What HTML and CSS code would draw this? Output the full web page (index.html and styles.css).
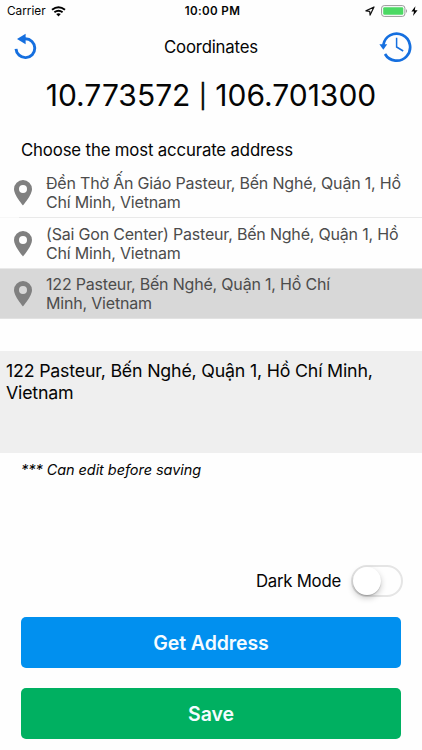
FILE: index.html
```html
<!DOCTYPE html>
<html lang="vi">
<head>
<meta charset="utf-8">
<title>Coordinates</title>
<link rel="stylesheet" href="styles.css">
</head>
<body>
<div class="screen">
  <div class="status">
    <div class="status-left"><span class="carrier">Carrier</span>
      <svg class="wifi" width="15" height="11" viewBox="0 0 15 11"><path d="M1 3.8Q7.5-1.5 14 3.8M3.4 6.3Q7.5 3 11.6 6.3" fill="none" stroke="#000" stroke-width="1.9"/><path d="M5.2 8.1Q7.5 6.4 9.8 8.1L7.5 10.5Z"/></svg>
    </div>
    <span class="time">10:00 PM</span>
    <div class="status-right">
      <svg width="10" height="10" viewBox="0 0 10 10"><path d="M.9 4.9L9 1 5.1 9.1 4.7 5.3Z" fill="none" stroke="#111" stroke-width="1.2" stroke-linejoin="round"/></svg>
      <svg class="battery" width="27" height="12" viewBox="0 0 27 12"><rect x=".6" y=".6" width="23.3" height="10.8" rx="2.6" fill="#fff" stroke="#999"/><rect x="2.2" y="2.2" width="20.1" height="7.6" rx="1.2" fill="#4cd964"/><path d="M25 4Q27 6 25 8Z" fill="#999"/></svg>
      <svg class="bolt" width="7" height="10" viewBox="0 0 7 10"><path d="M4.4.2L.4 5.5H3L2 9.9 6.6 4.2H3.8Z"/></svg>
    </div>
  </div>
  <div class="nav">
    <svg class="undo" width="24" height="28" viewBox="0 0 24 28"><path d="M3 15.8A9.4 9.4 0 1 0 12.4 5.8H10" fill="none" stroke="#156fdf" stroke-width="2.9"/><path d="M4 5.9L12.6.8V11.3Z" fill="#156fdf"/></svg>
    <h1 class="title">Coordinates</h1>
    <svg class="history" width="34" height="32" viewBox="0 0 34 32"><path d="M4.3 14A13.5 13.5 0 1 1 6 23" fill="none" stroke="#156fdf" stroke-width="2.7"/><path d="M.4 13.3H8.2L4.3 18.7Z" fill="#156fdf"/><path d="M17.6 6.8V16L24.2 20" fill="none" stroke="#156fdf" stroke-width="1.5"/></svg>
  </div>
  <div class="coords">10.773572 <span class="bar">|</span> 106.701300</div>
  <div class="prompt">Choose the most accurate address</div>
  <ul class="list">
    <li class="row"><svg class="pin" width="18" height="26" viewBox="0 0 18 26"><path fill-rule="evenodd" d="M9 0A9 9 0 0 1 18 9C18 15.3 9 25.4 9 25.4S0 15.3 0 9A9 9 0 0 1 9 0ZM9 5.1A4 4 0 1 0 9 13.1 4 4 0 0 0 9 5.1Z"/></svg><p class="address">Đền Thờ Ấn Giáo Pasteur, Bến Nghé, Quận 1, Hồ<br>Chí Minh, Vietnam</p></li>
    <li class="row"><svg class="pin" width="18" height="26" viewBox="0 0 18 26"><path fill-rule="evenodd" d="M9 0A9 9 0 0 1 18 9C18 15.3 9 25.4 9 25.4S0 15.3 0 9A9 9 0 0 1 9 0ZM9 5.1A4 4 0 1 0 9 13.1 4 4 0 0 0 9 5.1Z"/></svg><p class="address">(Sai Gon Center) Pasteur, Bến Nghé, Quận 1, Hồ<br>Chí Minh, Vietnam</p></li>
    <li class="row selected"><svg class="pin" width="18" height="26" viewBox="0 0 18 26"><path fill-rule="evenodd" d="M9 0A9 9 0 0 1 18 9C18 15.3 9 25.4 9 25.4S0 15.3 0 9A9 9 0 0 1 9 0ZM9 5.1A4 4 0 1 0 9 13.1 4 4 0 0 0 9 5.1Z"/></svg><p class="address">122 Pasteur, Bến Nghé, Quận 1, Hồ Chí<br>Minh, Vietnam</p></li>
  </ul>
  <div class="editor">122 Pasteur, Bến Nghé, Quận 1, Hồ Chí Minh,<br>Vietnam</div>
  <div class="note">*** Can edit before saving</div>
  <div class="actions">
    <div class="mode"><span class="mode-label">Dark Mode</span><span class="switch"><span class="knob"></span></span></div>
    <div class="button get">Get Address</div>
    <div class="button save">Save</div>
  </div>
</div>
</body>
</html>
```
FILE: styles.css
```css
* { box-sizing: border-box; }
body { margin: 0; background: #fefefe; color: #050505; font-family: Inter, "Noto Sans", sans-serif; }
.screen { width: 422px; height: 750px; display: flex; flex-direction: column; overflow: hidden; white-space: nowrap; }
.status { height: 22px; display: grid; grid-template-columns: 1fr auto 1fr; align-items: center; padding: 0 4px 0 7px; }
.status-left, .status-right { display: flex; align-items: center; }
.status-left { gap: 5px; }
.status-right { justify-content: flex-end; }
.carrier { font-size: 11.8px; }
.time { font-size: 11.6px; font-weight: 600; letter-spacing: .35px; }
.battery { margin-left: 6px; }
.bolt { margin-left: 3px; }
.nav { height: 50px; display: grid; grid-template-columns: 1fr auto 1fr; align-items: center; padding: 0 9px 0 13px; }
.title { margin: 0 2px 0 -2px; font-size: 16.8px; font-weight: 400; letter-spacing: -.2px; }
.history { justify-self: end; }
.coords { height: 49px; line-height: 47px; text-align: center; font-size: 30px; }
.bar { display: inline-block; width: 8px; font-size: 23.5px; line-height: 20px; vertical-align: 1px; -webkit-text-stroke: .4px #050505; }
.prompt { height: 47px; line-height: 20px; padding: 19px 0 0 21px; font-size: 16.8px; letter-spacing: -.16px; }
.list { margin: 0; padding: 0; list-style: none; }
.row { height: 50.4px; display: flex; align-items: center; gap: 14px; padding: 1px 0 0 14px; border-bottom: 1px solid #e9e9e9; }
.row:first-child { border-image: linear-gradient(to right, #f7f7f7 20px, #e9e9e9 20px) 1; }
.row.selected { background: #d8d8d8; border-bottom-color: #e2e2e2; }
.pin { fill: #808080; }
.address { margin: 0; color: #4c4c4c; font-size: 16px; line-height: 19px; letter-spacing: -.19px; }
.editor { height: 102px; margin-top: 32px; padding: 9px 6px; background: #efefef; font-size: 17.8px; line-height: 22px; letter-spacing: -.19px; }
.note { padding: 7px 0 0 21px; font-size: 14.5px; line-height: 20px; font-style: italic; letter-spacing: -.06px; }
.actions { margin-top: auto; padding: 0 21px 11px; }
.mode { height: 32px; display: flex; justify-content: flex-end; align-items: center; gap: 10px; margin: 0 -2px 20px 0; }
.mode-label { font-size: 16.8px; letter-spacing: -.25px; }
.switch { width: 52px; height: 32px; border-radius: 16px; border: 2px solid #e5e5e5; }
.knob { display: block; width: 28px; height: 28px; border-radius: 50%; background: #fff; box-shadow: 0 3px 6px rgba(0,0,0,.22), 0 1px 1px rgba(0,0,0,.18); }
.button { height: 51px; line-height: 52px; border-radius: 5px; color: #f5fcff; text-align: center; font-weight: 600; font-size: 19.5px; letter-spacing: -.1px; }
.get { background: #0190ef; margin-bottom: 20px; }
.save { background: #00b061; }
```
